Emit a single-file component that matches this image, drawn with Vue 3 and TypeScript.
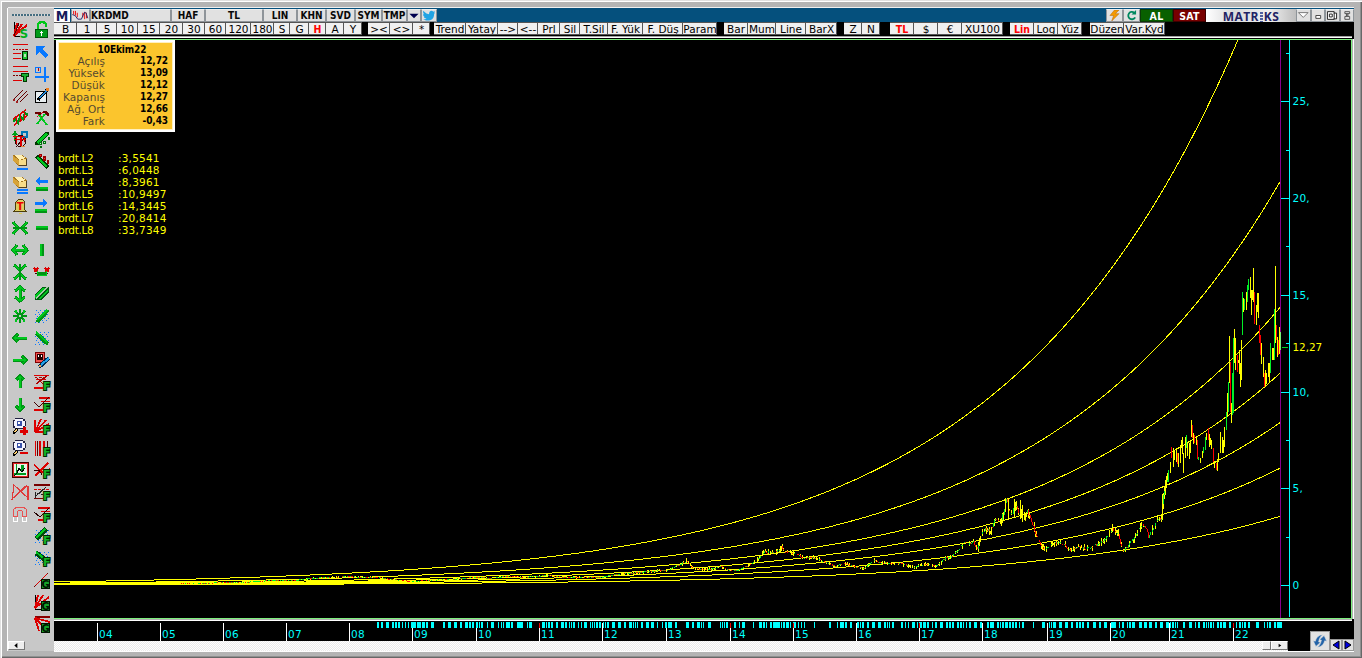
<script setup lang="ts">
type Layer = [color: string, d: string, width?: number]
interface Glyph { ch: string; x: number; y: number; fill: string; edge?: string; size: number }
interface Icon { layers: Layer[]; glyph?: Glyph }
interface Cell { label: string; w: number; hot?: boolean; gap?: boolean }
interface Bar { x: number; top: number; bottom: number; color: string }

const YELLOW = '#ffff00'
const GREEN = '#00f028'
const RED = '#f00'

/* ---------- title and tool rows ---------- */
const titleCells: Cell[] = [
  { label: 'KRDMD', w: 81 }, { label: 'HAF', w: 34 }, { label: 'TL', w: 58 }, { label: 'LIN', w: 34 },
  { label: 'KHN', w: 29 }, { label: 'SVD', w: 29 }, { label: 'SYM', w: 27 }, { label: 'TMP', w: 25 },
]
const parse = (spec: string): Cell[] => spec.split('|').map((part) => {
  const [label, w, flag] = part.split('~')
  return { label, w: Number(w), hot: flag === 'hot', gap: flag === 'gap' }
})
const tools = parse(
  'B~23|1~20|5~20|10~21|15~22|20~23|30~22|60~21|120~25|180~23|S~16|G~19|H~17~hot|A~18|Y~18|~6~gap|><~22|<>~23|*~17|~4~gap|' +
  'Trend~32|Yatay~32|-->~20|<--~20|Prl~22|Sil~20|T.Sil~28|F. Yük~35|F. Düş~40|Param~34|~7~gap|Bar~24|Mum~28|Line~30|BarX~31|~7~gap|' +
  'Z~18|N~18|~10~gap|TL~24~hot|$~24|€~24|XU100~41|~7~gap|Lin~24~hot|Log~24|Yüz~24|~8~gap|Düzen~34|Var.Kyd~41',
)

/* ---------- quote box ---------- */
const quote = [
  ['Açılış', '12,72'], ['Yüksek', '13,09'], ['Düşük', '12,12'],
  ['Kapanış', '12,27'], ['Ağ. Ort', '12,66'], ['Fark', '-0,43'],
]
const levels: [string, string][] = [
  ['brdt.L2', '3,5541'], ['brdt.L3', '6,0448'], ['brdt.L4', '8,3961'], ['brdt.L5', '10,9497'],
  ['brdt.L6', '14,3445'], ['brdt.L7', '20,8414'], ['brdt.L8', '33,7349'],
]

/* ---------- chart ---------- */
const yOf = (v: number) => 585.2 - v * 19.36
const curves = levels.map(([, text]) => {
  const last = Number(text.replace(',', '.'))
  const pts: string[] = []
  for (let x = 54; x <= 1280; x += 2) {
    const y = yOf(last * Math.exp((x - 1280) * 0.00429))
    if (y > 20) pts.push(`${x},${y.toFixed(1)}`)
  }
  return pts.join(' ')
})

const trend = (
  '54,584 120,584 190,583 240,582 275,580 295,580 310,578 330,577 345,576 360,577 375,577 390,579 410,581 430,580 450,579 475,577 490,578 505,576 525,577 545,575 565,577 580,577 600,577 ' +
  '618,574 632,573 650,571 660,570 667,570 675,566 686,561 692,568 700,569 710,569 720,566 728,570 738,570 745,566 752,563 758,558 764,552 ' +
  '770,552 777,551 781,547 785,552 795,553 803,558 812,557 822,561 834,566 845,563 855,567 864,568 873,560 880,563 900,563 912,567 925,564 ' +
  '935,566 940,563 945,558 950,557 957,551 963,543 970,544 973,542 977,550 981,534 986,529 990,531 995,518 1000,521 1003,513 1006,500 1010,516 ' +
  '1015,505 1019,514 1021,510 1024,518 1027,512 1032,524 1036,536 1041,547 1045,549 1052,543 1060,543 1064,545 1070,551 1078,546 1085,549 ' +
  '1093,546 1100,543 1106,537 1112,529 1118,535 1122,550 1127,547 1132,539 1136,535 1141,525 1146,529 1148,537 1153,529 1157,519 1161,520 ' +
  '1163,493 1165,486 1168,475'
).split(' ').map((p) => p.split(',').map(Number))

let seed = 77
const rnd = () => {
  seed = (seed * 16807) % 2147483647
  return seed / 2147483647
}
const trendAt = (x: number) => {
  let i = 1
  while (i < trend.length - 1 && trend[i][0] < x) i++
  const [x0, y0] = trend[i - 1]
  const [x1, y1] = trend[i]
  return y0 + ((y1 - y0) * (x - x0)) / (x1 - x0)
}
const bars: Bar[] = []
let prev = trendAt(180)
for (let x = 180; x < 1168; x++) {
  const height = 585 - trendAt(x)
  const close = trendAt(x) + (rnd() - 0.5) * height * 0.06
  const move = close - prev
  const noise = height * 0.08
  const top = Math.min(prev, close)
  const size = Math.max(1, Math.abs(move))
  if (rnd() > 0.5 && height > 5) {
    const up = rnd() * noise
    bars.push({ x, top: Math.round(top - up), bottom: Math.round(top + size + rnd() * noise), color: YELLOW })
  }
  if (rnd() > 0.35) bars.push({ x, top: Math.round(top), bottom: Math.round(top + size), color: move < 0 ? GREEN : RED })
  prev = close
}
for (const [x, top, bottom] of [[686, 558, 564], [781, 546, 551], [1005, 498, 512], [1008, 499, 520], [1014, 499, 517], [1020, 500, 519], [1022, 505, 522], [1162, 494, 520]]) {
  bars.push({ x, top, bottom, color: YELLOW })
}
const recent =
  '1168 470 482 g,1170 462 473 y,1171 447 458 r,1173 448 467 y,1174 450 460 y,1176 448 462 y,1177 453 464 r,1178 453 467 y,1180 445 463 y,1181 440 448 y,' +
  '1182 437 454 y,1183 453 473 y,1185 437 458 y,1186 435 448 g,1187 443 456 y,1189 443 459 y,1190 440 453 y,1191 420 437 y,1192 425 438 r,1193 433 444 y,1194 435 443 r,1196 437 445 y,' +
  '1197 440 459 r,1198 457 460 g,1200 458 463 y,1202 451 458 y,1203 447 453 g,1205 437 450 g,1206 433 440 y,1208 428 440 r,1209 434 447 y,1210 438 445 y,1211 440 449 y,1213 448 462 r,' +
  '1214 461 468 y,1216 463 470 r,1217 459 471 y,1218 453 462 y,1220 432 453 y,1222 437 453 y,1223 440 453 y,1224 427 447 y,1226 412 430 g,1227 393 417 y,1228 382 412 g,1229 336 383 y,' +
  '1230 362 412 r,1231 403 423 y,1232 373 415 g,1233 338 413 g,1234 329 363 y,1235 338 370 y,1237 355 372 r,1238 360 363 y,1239 350 374 y,1240 363 387 y,1241 340 380 y,1242 292 335 g,' +
  '1243 298 312 y,1244 299 310 g,1246 292 310 y,1247 285 302 g,1248 279 290 g,1250 277 298 y,1251 290 315 y,1252 290 300 y,1253 268 302 y,1254 292 324 r,1256 305 325 y,1257 293 312 y,1258 293 318 y,' +
  '1259 325 343 r,1260 335 355 r,1261 343 364 y,1263 357 377 y,1264 373 387 r,1265 370 385 y,1266 373 384 y,1268 363 377 y,1269 363 383 y,1270 343 373 g,1272 348 360 y,1273 348 360 y,' +
  '1274 309 360 g,1275 266 343 y,1276 325 340 r,1277 337 357 y,1278 340 355 r,1279 327 354 y'
const palette: Record<string, string> = { g: GREEN, r: RED, y: YELLOW }
for (const item of recent.split(',')) {
  const [x, top, bottom, c] = item.split(' ')
  bars.push({ x: +x, top: +top, bottom: +bottom, color: palette[c] })
}

const majors = [0, 5, 10, 15, 20, 25].map((v) => ({ y: Math.round(yOf(v)), label: v === 0 ? '0' : `${v},` }))
const minors = [2.5, 7.5, 12.5, 17.5, 22.5, 27.5].map((v) => Math.round(yOf(v)))

/* ---------- time axis ---------- */
const years = [97, 160, 223, 286, 349, 412, 476, 539, 602, 666, 730, 793, 856, 919, 982, 1047, 1110, 1169, 1233]
  .map((x, i) => ({ x, label: String(i + 4).padStart(2, '0') }))
const events = (
  '377.2 381.2 386.3 392.2 395.2 398.2 402.1 405.1 408.1 411.5 417.4 422.3 426.2 431.3 443.2 448.3 454.3 460.2 465.3 469.2 472.2 476.2 479.1 481.2 ' +
  '487.1 491.3 498.1 501.1 503.1 506.4 511.2 517.6 527.1 529.3 542.3 546.1 548.2 551.2 556.2 561.3 565.2 569.1 571.1 573.2 578.1 581.1 584.3 590.1 ' +
  '592.1 594.1 596.2 599.2 603.1 605.1 607.2 612.3 618.3 624.2 629.3 633.1 635.1 637.1 641.2 646.3 651.3 657.1 662.1 665.2 668.2 670.2 675.2 686.3 ' +
  '692.2 697.3 701.1 703.1 708.3 720.1 722.1 724.1 726.2 734.2 739.1 742.3 753.1 759.3 763.2 766.1 770.2 773.7 781.1 783.2 786.3 790.1 793.3 798.1 ' +
  '801.1 804.1 814.1 829.2 837.1 840.4 845.2 850.2 857.2 860.1 862.2 867.2 872.3 878.3 884.2 887.1 889.1 892.2 901.2 905.1 908.1 912.3 917.1 919.3 ' +
  '923.3 927.2 932.1 935.2 940.3 946.2 949.2 952.2 957.2 960.2 963.1 966.1 969.2 974.3 980.2 987.2 990.4 997.2 1000.1 1002.2 1005.3 1009.2 1012.2 ' +
  '1015.2 1019.1 1022.2 1033.1 1042.3 1049.1 1051.1 1053.3 1059.3 1065.3 1071.2 1076.2 1079.2 1082.2 1087.2 1093.3 1099.2 1104.3 1111.5 1119.1 ' +
  '1122.2 1127.1 1129.2 1132.3 1139.3 1144.3 1149.3 1155.2 1160.3 1166.3 1170.1 1172.2 1175.1 1177.1 1183.2 1189.3 1195.1 1198.2 1203.2 1206.1 ' +
  '1208.1 1210.2 1213.1 1217.2 1220.2 1223.3 1229.2 1236.1 1239.2 1242.1 1244.2 1248.2 1256.3 1264.1 1267.1 1269.2 1274.2 1277.5'
).split(' ').map((s) => s.split('.').map(Number))
const markers = [539, 730, 793, 919, 1233]

/* ---------- side palette icons, 22 x 22 cells ---------- */
const DG = '#009414'
const LG = '#00c81e'
const BL = '#0878ff'
const RD = '#dc0000'
const f = (x = 12, y = 19): Glyph => ({ ch: 'F', x, y, fill: '#14b428', edge: '#002800', size: 11 })
const box: Layer[] = [['#001400', 'M10 10h9v10h-9z'], ['#14a428', 'M11 11h7v8h-7z']]
const gch: Glyph = { ch: 'G', x: 10.6, y: 18.6, fill: '#001400', size: 10 }
const hatch: Layer = [BL, 'M5 5.5h1m3 0h1m3 0h1m3 0h1M7 7.5h1m3 0h1m3 0h1M4 9.5h1m3 0h1m3 0h1m3 0h1M6 11.5h1m3 0h1m3 0h1M5 13.5h1m3 0h1m3 0h1m3 0h1M7 15.5h1m3 0h1m3 0h1M4 17.5h1m3 0h1m3 0h1', 1]
const gold: Layer[] = [
  ['#a87820', 'M4 4h9l5 3v8h-8l-6-5z'], ['#fff0b4', 'M5 4h7l5 3-7 2z'], ['#d7a338', 'M4 5l6 4v5l-6-4z'], ['#f8dc88', 'M10 9l7-1v6h-7z'], ['#504020', 'M10 14h8v1h-8zM17 8h1v6h-1z'],
]
const arrow = (d: string): Layer[] => [[DG, d, 3], [LG, d, 1.4]]

const leftIcons: Icon[] = [
  { layers: [['#000', 'M5.5 3v14.500H11', 1], [RD, 'M5 17L8 4M5 17L13 5M5 17L18 6', 2], ['#500', 'M5 17L10 4', 1]], glyph: { ch: 'S', x: 10.5, y: 18.5, fill: '#00b01c', size: 12 } },
  { layers: [[RD, 'M4 3h15v1H4zM4 12h8v1H4zM4 17h8v1H4z'], ['#c00000', 'M4 8h2v1H4zM7 8h2v1H7zM10 8h2v1h-2zM13 8h2v1h-2zM16 8h3v1h-3z'], ['#002000', 'M13 10h6v9h-6z'], ['#18c030', 'M14 11h4v7h-4z'], ['#b8e8b8', 'M15 13h2v3h-2z']] },
  { layers: [[RD, 'M4 3h15v1H4zM4 8h15v1H4zM4 17h9v1H4z'], ['#700', 'M4 12h2v1H4zM7 12h2v1H7zM10 12h2v1h-2z'], ['#003800', 'M12 10h8v4h-2v5h-4v-5h-2z'], ['#18b030', 'M13 11h6v2h-2v5h-2v-5h-2z']] },
  { layers: [['#650000', 'M4 15L14 5M7 17L18 6M11 17l8-8', 1], ['#a02020', 'M4 14h2v2H4zM7 16h2v2H7z']] },
  { layers: [[RD, 'M4 12L17 3M5 18L18 9', 1.5], [DG, 'M4 15l3-3 2 4 2-7 3 3 2-6 3 2', 2], [RD, 'M7 9v8M11 7v8M15 5v8', 1]] },
  { layers: [['#0078b8', 'M13 3h5v5h-5z', 1.2], ['#00a018', 'M6 12V3M4 6l2-3 2 3', 1.5], ['#300', 'M6 12a5 5 0 1 0 11 0a5 5 0 1 0-11 0M7 18l9-10', 1], [RD, 'M4 7h11v1H4zM5 10h12v1H5zM7 8h1v7H7zM11 7h2v10h-2zM15 8h1v5h-1z'], ['#e88840', 'M12 17h4v1h-4z']] },
  { layers: [...gold, [BL, 'M8 17h11v2H8z']] },
  { layers: [...gold, [BL, 'M8 16h11v2H8zM8 19h11v2H8z']] },
  { layers: [['#4a3c08', 'M4 17l2-3V7l3-3h4l3 3v7l2 3z'], ['#dccc60', 'M6 16l1-2V7l3-2h3l2 2v7l1 2z'], ['#dccc60', 'M10 18h3v1h-3z']], glyph: { ch: 'T', x: 7.8, y: 15, fill: '#e00', size: 10 } },
  { layers: [...arrow('M4 5l5 6-5 6M18 5l-5 6 5 6'), [DG, 'M4 10h14v2H4z']] },
  { layers: arrow('M8 6l-4 5 4 5M14 6l4 5-4 5M4 11h14') },
  { layers: [...arrow('M5 4l6 5 6-5M5 18l6-5 6 5'), [DG, 'M10 3h2v16h-2z']] },
  { layers: arrow('M6 8l5-4 5 4M6 14l5 4 5-4M11 4v14') },
  { layers: [[DG, 'M4 11h14M11 4v14M6 6l10 10M16 6L6 16', 1.6], [LG, 'M7 8V5M15 8V5M7 14v3M15 14v3', 1.2], ['#c8c8c8', 'M10 10h2v2h-2z']] },
  { layers: arrow('M18 11H5M9 7l-4 4 4 4') },
  { layers: arrow('M4 11h13M13 7l4 4-4 4') },
  { layers: arrow('M11 17V5M7 9l4-4 4 4') },
  { layers: arrow('M11 5v12M7 13l4 4 4-4') },
  { layers: [['#202040', 'M6 3h8v1h2v2h1v5h-1v2h-2v1H6v-1H4V5h2z'], ['#f4f4ff', 'M6 4h8v2h2v5h-2v2H6v-2H5V6h1z'], ['#3850a8', 'M8 6h5v5H8z'], ['#fff', 'M9 7h2v2H9z'], ['#000', 'M4 16l3-3 2 2-3 4H4z'], ['#ffd070', 'M5 16l2-2 1 1-2 3z'], [RD, 'M11 15h8v3h-8zM14 12h3v8h-3z']] },
  { layers: [['#202040', 'M6 3h8v1h2v2h1v5h-1v2h-2v1H6v-1H4V5h2z'], ['#f4f4ff', 'M6 4h8v2h2v5h-2v2H6v-2H5V6h1z'], ['#3850a8', 'M8 6h5v5H8z'], ['#fff', 'M9 7h2v2H9z'], ['#000', 'M4 16l3-3 2 2-3 4H4z'], ['#ffd070', 'M5 16l2-2 1 1-2 3z'], [RD, 'M11 15h8v2h-8z']] },
  { layers: [['#400', 'M3 3h17v16H3z'], ['#e02020', 'M4 4h15v14H4z'], ['#e8f4e8', 'M5 5h13v12H5z'], ['#009c20', 'M7 5h1v9h9v2H5v-2h2zM12 6h3v6h-3z'], ['#000', 'M5 17l3-3 2-5 3 4 3-4', 1]] },
  { layers: [['#e03a3a', 'M3 19L5 4l13 12 1-11M3 18L18 5M19 5v14M3 18L18 4', 1.2]] },
  { layers: [['#e85050', 'M4.500 13V8c0-5 13-5 13 0v5M8.500 13V9c0-2 5-2 5 0v4M4 13.500h5M13 13.500h5', 1], ['#fff', 'M4.500 14v4.500h4V14M13.500 14v4.500h4V14', 1]] },
]

const rightIcons: Icon[] = [
  { layers: [['#00c818', 'M7 11V6c0-4 8-4 8 0v2', 2.4], ['#00550c', 'M4 10h13v9H4z'], ['#009b18', 'M5 11h11v7H5z'], ['#fff', 'M10 12h1v1h1v1h-1v3h-1v-3H9v-1h1z']] },
  { layers: [[BL, 'M5 5h9l-3 3 6 6-3 3-6-6-3 3z']] },
  { layers: [[BL, 'M13 4h2v15h-2zM4 13h14v2H4z'], [BL, 'M4.500 4.500h5v5h-5z', 1], ['#c00000', 'M7 5h1v3H7z']] },
  { layers: [['#000', 'M4 6h12v12H4z'], ['#e8eef0', 'M5 7h10v10H5z'], ['#000', 'M7 15L16 5', 3], ['#2088d8', 'M9 13l7-8', 1.6], ['#f08020', 'M15 3h3v3h-3z']] },
  { layers: [[RD, 'M6 10l8-6M12 10L5 6', 1], ['#680000', 'M4 5h6v3H8V7H4zM12 4h4l2 3v2h-2l-2-3h-2z'], [LG, 'M6 17L14 7M8 8l8 10', 2]] },
  { layers: [['#003800', 'M4 13L14 3h4v3L7 16H4z'], [LG, 'M5 13L15 4l2 1L7 15z'], ['#007010', 'M9 17h2v2H9zM8 13h3v3H8zM12 12h3v3h-3zM17 8h2v3h-2z'], ['#b8ffb8', 'M9 14h1v1H9zM13 13h1v1h-1zM6 17h1v1H6z']] },
  { layers: [['#003800', 'M4 6l3-2 11 11-3 3z'], [LG, 'M5 7l2-1 9 9-1 1z'], ['#900', 'M8 3h3v3H8zM12 5h3v5h-3zM16 9h2v4h-2z'], ['#f33', 'M9 4h1v1H9zM13 7h1v1h-1z']] },
  { layers: [[BL, 'M4 8l5-4v3h8v3H9v2z'], [DG, 'M5 14h12v4H5z'], [LG, 'M5 14h12v2H5z']] },
  { layers: [[BL, 'M17 8l-5-4v3H4v3h8v2z'], [DG, 'M4 14h12v4H4z'], [LG, 'M4 14h12v2H4z']] },
  { layers: [[DG, 'M5 9h12v4H5z'], [LG, 'M5 9h12v2H5z']] },
  { layers: [[DG, 'M9 5h4v12H9z'], [LG, 'M9 5h2v12H9z']] },
  { layers: [['#d00', 'M3 7l4 4M7 7l-4 4M14 7l4 4M18 7l-4 4', 1.6], ['#400', 'M4 12h2v1H4zM15 12h2v1h-2z'], [DG, 'M6 11h10v4H6z'], [LG, 'M6 10h1v4h8v-4h1v4l-1 1H7z']] },
  { layers: [['#005c10', 'M4 11l8-7h6v5L10 17H4z'], [LG, 'M4 12l8-7h2L4 15zM7 16L17 6v2L9 16z'], ['#a8c8a8', 'M4 15L16 4l1 1L5 16z']] },
  { layers: [hatch, [DG, 'M6 17L17 5', 4], [LG, 'M6 15L16 5', 1.8]] },
  { layers: [hatch, [DG, 'M5 6l12 11', 4], [LG, 'M5 5l11 10', 1.8]] },
  { layers: [['#800000', 'M4 3h10v11H4z'], ['#f05050', 'M5 4h8v9H5z'], ['#200', 'M6 5h6v6H6z'], ['#fff', 'M7 6h1v2H7zM10 6h1v2h-1z'], ['#002850', 'M8 18L18 9', 4], ['#20a0e8', 'M10 16l8-7', 2], ['#f0a050', 'M8 16h2v2H8z']] },
  { layers: [[RD, 'M3 4h15v1H3zM5 8h10v1H5zM3 16h9v2H3z'], ['#a00', 'M4 6h2v1H4zM8 6h3v1H8zM12 6h3v1h-3z'], ['#a00', 'M5 13L16 5M5 6l8 8', 1.3]], glyph: f() },
  { layers: [[RD, 'M8 4h11v2H8zM10 8h9v1h-9zM3 16h9v2H3z'], ['#400', 'M3 9l5 5 10-10', 1]], glyph: f() },
  { layers: [[RD, 'M4 17V5M4 17L10 4M4 17L15 5M4 17L18 9M4 17h8', 1.6]], glyph: f() },
  { layers: [[RD, 'M4 4h1v15H4zM8 4h2v15H8zM12 4h2v15h-2z'], ['#500', 'M6 4h1v15H6zM16 4h1v6h-1z']], glyph: f() },
  { layers: [[RD, 'M3 6l8 7 8-3M4 17L17 4', 1.6], ['#300', 'M3 11.5h5l3 4', 1]], glyph: f() },
  { layers: [['#700', 'M3 3h16v2H3zM3 17h9v1H3z'], [RD, 'M3 8h3v1H3zM7 8h3v1H7zM11 8h3v1h-3zM15 8h3v1h-3z'], ['#222', 'M5 15L15 6', 1], ['#222', 'M4 11h1v6H4zM6 12h2v1H6zM10 13h2v1h-2z']], glyph: f() },
  { layers: [[RD, 'M7 4h12v2H7zM10 8h9v1h-9zM7 16h6v2H7z'], ['#200', 'M3 9l6 5L18 5', 1]], glyph: f() },
  { layers: [hatch, ['#004810', 'M5 14L15 4', 5], [LG, 'M5 13L14 4', 2]], glyph: f() },
  { layers: [hatch, ['#004810', 'M5 6l11 8', 5], [LG, 'M5 5l10 8', 2]], glyph: f() },
  { layers: [['#700', 'M3 18L17 4', 1.4], [RD, 'M5 16L16 5', 1], ...box], glyph: gch },
  { layers: [['#000', 'M4.500 4v14H11', 1], [RD, 'M4 17L7 4M4 17L12 4M4 17L18 6', 1.8], ...box], glyph: gch },
  { layers: [['#800', 'M4 3h15v2H4z'], [RD, 'M4 5L8 18M4 5l9 9M4 5l15 4', 1.8], ...box], glyph: gch },
]
</script>

<template>
  <div class="window">
    <aside class="palette">
      <div class="grip"></div>
      <div class="columns">
        <div v-for="(column, c) in [leftIcons, rightIcons]" :key="c" class="column">
          <svg v-for="(icon, i) in column" :key="i" class="icon" viewBox="0 0 22 22">
            <path
              v-for="([color, d, width], k) in icon.layers" :key="k" :d="d"
              :fill="width ? 'none' : color" :stroke="width ? color : 'none'" :stroke-width="width ?? 0"
            />
            <text
              v-if="icon.glyph" class="glyph" :x="icon.glyph.x" :y="icon.glyph.y" :fill="icon.glyph.fill"
              :font-size="icon.glyph.size" :stroke="icon.glyph.edge ?? 'none'" stroke-width="2"
            >{{ icon.glyph.ch }}</text>
          </svg>
        </div>
      </div>
    </aside>

    <main class="workspace">
      <header class="title">
        <div class="mark">M</div>
        <div class="tile wave">
          <svg viewBox="0 0 18 12"><path d="M1.500 1v4M3.500 1v5M5.500 3v5M13.500 2v8M15.500 3v6M11.500 3v5" stroke="#e00" /><path d="M0 5l3 1 3 4h4l3-7h2l2 6" fill="none" stroke="#25256a" /></svg>
        </div>
        <div v-for="(cell, i) in titleCells" :key="cell.label" class="tile" :class="{ first: i === 0 }" :style="{ width: cell.w + 'px' }">{{ cell.label }}</div>
        <div class="tile drop"><svg viewBox="0 0 12 12"><path d="M1 4h10L6 9z" fill="#000050" /></svg></div>
        <div class="tile bird">
          <svg viewBox="0 0 16 13"><path d="M1 1l4 3 3 1c0-5 4-5 5-3l2-1-1 2h1l-1 2c0 8-8 9-13 6 2 0 3 0 4-1-2 0-3-1-3-2h1C1 7 1 6 1 5h1C1 4 1 2 1 1z" fill="#22a4e4" /></svg>
        </div>
        <div class="spacer"></div>
        <div class="tile small"><svg viewBox="0 0 16 12"><path d="M8 0h5L9 4h4L5 12l2-6H3z" fill="#f49a00" stroke="#b06000" stroke-width=".5" /></svg></div>
        <div class="tile small"><svg viewBox="0 0 16 12"><path d="M11 3a4 4 0 1 0 1 5" fill="none" stroke="#00885f" stroke-width="2" /><path d="M8 5h5V0z" fill="#00885f" /></svg></div>
        <div class="order buy">AL</div>
        <div class="order sell">SAT</div>
        <div class="brand"><span>MATR</span><i class="dots"></i><span>KS</span></div>
        <div class="tile control"><svg viewBox="0 0 13 11"><path d="M1.500 2.500h10l-5 5z" fill="#fff" stroke="#777" /></svg></div>
        <div class="tile control"><svg viewBox="0 0 13 11"><path d="M4 5.500h5v3H4z" fill="#fff" stroke="#444" /></svg></div>
        <div class="tile control"><svg viewBox="0 0 13 11"><path d="M1.500 1.500h7v8h-7zM8 3h3v6H8M3.500 4h3v3h-3z" fill="#fff" stroke="#222" /></svg></div>
        <div class="tile control"><svg viewBox="0 0 13 11"><path d="M4 1.500h5v2H4zM4 6.500h5v3H4zM5 4l3 2M8 4L5 6" fill="none" stroke="#555" /></svg></div>
      </header>

      <nav class="tools">
        <div v-for="(cell, i) in tools" :key="i" :class="[cell.gap ? 'gap' : 'tool', { hot: cell.hot }]" :style="{ width: cell.w + 'px' }">{{ cell.label }}</div>
      </nav>

      <section class="chart">
        <svg class="plot" viewBox="54 40 1297 578">
          <g fill="none" :stroke="YELLOW" stroke-width="1">
            <polyline v-for="(points, i) in curves" :key="i" :points="points" />
          </g>
          <rect v-for="(b, i) in bars" :key="i" :x="b.x" :y="b.top" width="1" :height="b.bottom - b.top" :fill="b.color" />
          <rect x="1280" y="40" width="1" height="578" fill="#8c008c" />
          <rect x="1280" y="332" width="1" height="18" fill="#78f078" />
          <rect x="1289" y="40" width="1" height="577" fill="#00ffff" />
          <g fill="#00ffff">
            <rect v-for="m in majors" :key="m.y" x="1281" :y="m.y" width="8" height="1" />
            <rect v-for="y in minors" :key="y" x="1286" :y="y" width="3" height="1" />
            <text v-for="m in majors" :key="m.label" x="1292.500" :y="m.y + 4">{{ m.label }}</text>
          </g>
          <rect x="1282" y="347" width="6" height="1" fill="#00d820" />
          <text x="1292.500" y="351" textLength="30" :fill="YELLOW">12,27</text>
          <g :fill="YELLOW">
            <template v-for="([name, value], i) in levels" :key="name">
              <text x="58" :y="162 + i * 12" textLength="36">{{ name }}</text>
              <text x="118" :y="162 + i * 12">:{{ value }}</text>
            </template>
          </g>
        </svg>
        <div class="quote">
          <div class="date">10Ekim22</div>
          <div v-for="[name, value] in quote" :key="name" class="entry"><span>{{ name }}</span><b>{{ value }}</b></div>
        </div>
      </section>

      <footer class="bottom">
        <div class="timeline">
          <svg class="axis" viewBox="54 621 1234 20">
            <rect v-for="y in years" :key="y.x" :x="y.x" y="623" width="1" height="18" fill="#fff" />
            <rect v-for="([x, w], i) in events" :key="i" :x="x" y="622" :width="w" height="6" fill="#00ffff" />
            <rect v-for="x in markers" :key="x" :x="x" y="623" width="1" height="5" fill="#e00" />
            <text v-for="y in years" :key="y.label" :x="y.x + 2" y="638" fill="#00ffff">{{ y.label }}</text>
          </svg>
          <div class="scroll">
            <div class="thumb"></div>
            <div class="step"><svg viewBox="0 0 16 8"><path d="M7 2l3 2-3 2z" fill="#000" /></svg></div>
          </div>
        </div>
        <div class="nav">
          <div class="sync"><svg viewBox="0 0 18 18"><path d="M7 15.500L2.500 11l2.200-.2C4.300 6.800 6 3.500 9.300 2.200 7.800 4.300 7.500 7 8 10.300l2-.3zM11 2.500L15.500 7l-2.200.2c.4 4-1.300 7.300-4.600 8.600 1.500-2.100 1.800-4.800 1.300-8.100L8 8z" fill="#2464a8" stroke="#e2e2e2" stroke-width=".5" transform="rotate(20 9 9)" /></svg></div>
          <div class="jump"><svg viewBox="0 0 10 10"><path d="M8 1v8L2 5z" fill="#0000e0" stroke="#000" /></svg></div>
          <div class="jump"><svg viewBox="0 0 10 10"><path d="M2 1v8l6-4z" fill="#0000e0" stroke="#000" /></svg></div>
        </div>
      </footer>
    </main>
    <div class="corner"><svg viewBox="0 0 16 8"><path d="M9 1v6L5.500 4z" fill="#000" /></svg></div>
  </div>
</template>

<style>
body { overflow: hidden; background: #b4b4b4; }
</style>

<style scoped>
.window {
  box-sizing: border-box;
  position: relative;
  width: 1362px;
  height: 658px;
  padding: 8px 8px 7px;
  display: flex;
  background: #b4b4b4;
  box-shadow: inset 1px 1px #e0e0e0, inset 2px 2px #fff, inset -1px -1px #686868, inset -2px -2px #909090;
  font-family: "DejaVu Sans", Verdana, sans-serif;
  font-size: 10.5px;
  line-height: 12px;
}
.palette {
  width: 46px;
  background: #c8c8c8;
  box-shadow: -1px 0 #fff, 0 -1px #f0f0f0;
}
.grip {
  height: 2px;
  margin: 6px 3px 3px 4px;
  background: repeating-linear-gradient(90deg, #456d80 0 2px, #d8d8d8 2px 3px);
}
.columns { display: flex; margin-left: 1px; }
.column { width: 22px; display: flex; flex-direction: column; }
.icon { width: 22px; height: 22px; display: block; shape-rendering: crispEdges; }
.glyph { font-weight: bold; paint-order: stroke; }
.workspace {
  width: 1300px;
  display: flex;
  flex-direction: column;
  background: #000;
  box-shadow: 0 -1px #f0f0f0, 0 1px #fff;
}
.title {
  height: 14px;
  flex: none;
  display: flex;
  background: #05507d;
  font: bold 10px/12px "DejaVu Sans Condensed", "DejaVu Sans", sans-serif;
  font-stretch: condensed;
  letter-spacing: 0;
  color: #080808;
}
.tile, .mark, .order, .brand {
  box-sizing: border-box;
  height: 13px;
  margin-top: 1px;
  text-align: center;
  white-space: nowrap;
}
.tile {
  background: #e1e1e1;
  border: 1px solid #8e9499;
  border-top-color: #eee;
  line-height: 12px;
  overflow: hidden;
}
.tile svg { display: block; width: 100%; height: 11px; }
.mark { width: 16px; margin-right: 1px; background: #fff; color: #151b5b; font-size: 14px; line-height: 14px; }
.wave { width: 19px; }
.first { text-align: left; padding-left: 0; }
.drop { width: 14px; }
.bird { width: 16px; }
.spacer { flex: 1; }
.small { width: 17px; }
.order { width: 33px; color: #fff; line-height: 12px; border: 1px solid #000; font-size: 10.5px; letter-spacing: .3px; }
.buy { background: #086000; border-color: #0b3a08; }
.sell { background: #780000; border-color: #3c0000; }
.brand {
  width: 90px;
  display: flex;
  justify-content: center;
  background: linear-gradient(90deg, #fff, #d9dadc 30%, #f0f0f0 70%, #bdbdbd);
  color: #222365;
  font: bold 12px/15px "Open Sans", sans-serif;
  letter-spacing: .4px;
}
.dots { width: 3px; height: 10px; margin: 3px 1px 0; background: repeating-linear-gradient(#5060a0 0 2px, transparent 2px 3px); }
.control { width: 14.500px; }
.tools { height: 13px; flex: none; display: flex; background: #000; }
.tool, .gap { box-sizing: border-box; flex: none; height: 13px; white-space: nowrap; }
.tool {
  background: #f0f0f0;
  border: 1px solid #555;
  border-left-width: 0;
  padding-left: 1px;
  display: flex;
  justify-content: center;
  line-height: 13px;
  color: #000;
  overflow: hidden;
}
.hot { color: #f00; font-weight: bold; font-family: "DejaVu Sans Condensed", "DejaVu Sans", sans-serif; }
.chart {
  position: relative;
  box-sizing: border-box;
  flex: none;
  height: 580px;
  margin-top: 4px;
  width: 1298px;
  background: #000;
  border-top: 1px solid #7df07d;
  border-right: 1px solid #7df07d;
  border-bottom: 1px solid #7df07d;
  box-shadow: 0 -1px #000, 0 -2px #fff, 0 -3px #a0a0a0, 0 1px #b0b0b0, 0 2px #fff, 1px 0 #b0b0b0, 2px 0 #fff;
}
.plot { display: block; width: 1297px; height: 578px; shape-rendering: crispEdges; letter-spacing: .2px; }
.quote {
  position: absolute;
  left: 2px;
  top: 0;
  box-sizing: border-box;
  width: 119px;
  height: 92px;
  padding: 2px 5px 2px 4px;
  border: 2px solid #fff;
  background: #fbc52d;
  box-shadow: inset 0 0 0 1px #fff0c0;
  color: #554a30;
  letter-spacing: .1px;
}
.date, .quote b { font: bold 10px/12px "DejaVu Sans Condensed", "DejaVu Sans", sans-serif; color: #000; font-stretch: condensed; letter-spacing: -.1px; }
.date { height: 11px; text-align: center; padding-left: 14px; }
.entry { display: flex; justify-content: space-between; height: 12px; }
.entry span { width: 43px; text-align: right; white-space: nowrap; display: flex; justify-content: flex-end; }
.bottom { display: flex; height: 32px; }
.timeline { width: 1234px; margin-top: 2px; }
.axis { display: block; width: 1234px; height: 20px; shape-rendering: crispEdges; letter-spacing: .3px; }
.scroll {
  height: 10px;
  display: flex;
  justify-content: flex-end;
  background: repeating-conic-gradient(#fff 0 25%, #ebebeb 0 50%) 0 0 / 2px 2px;
}
.thumb, .step, .corner { box-sizing: border-box; height: 9px; background: #eee; border: 1px solid #777; border-top-color: #fff; border-left-color: #fff; }
.thumb { width: 9px; }
.step { width: 17px; }
.step svg, .corner svg { display: block; width: 15px; height: 7px; }
.corner { position: absolute; left: 8px; top: 641px; width: 17px; }
.nav { width: 44px; margin-left: 22px; display: flex; align-items: flex-end; }
.sync, .jump { box-sizing: border-box; background: #e2e2e2; border: 1px solid #999; }
.sync { width: 20px; height: 20px; }
.jump { width: 12px; height: 12px; }
.sync svg, .jump svg { display: block; width: 100%; height: 100%; }
</style>
